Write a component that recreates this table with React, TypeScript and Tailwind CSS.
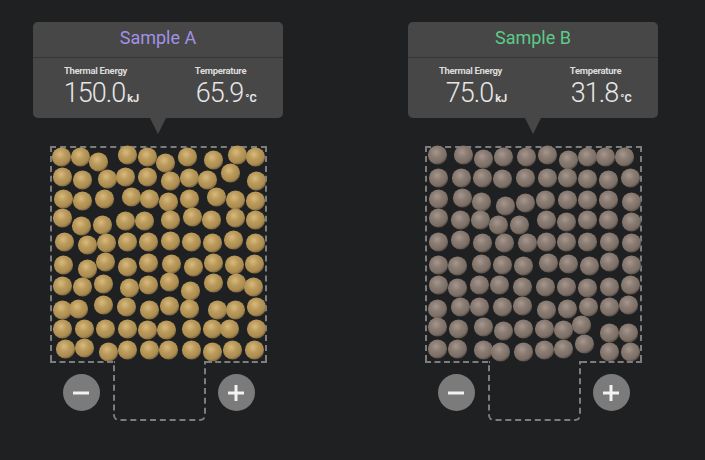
import React from 'react';

type Pt = [number, number];

const particlesA: Pt[] = [
  [61, 157], [80, 157], [98, 162], [127, 155], [147, 157], [165, 163], [187, 157], [213, 160], [237, 155], [255, 157],
  [62, 177], [82, 180], [107, 179], [125, 177], [147, 177], [170, 181], [189, 178], [207, 180], [230, 173], [256, 181],
  [63, 199], [82, 201], [104, 199], [131, 197], [149, 199], [168, 202], [189, 199], [216, 197], [235, 200], [255, 201],
  [62, 218], [81, 226], [102, 225], [125, 221], [144, 221], [170, 220], [192, 217], [211, 220], [235, 218], [255, 220],
  [64, 242], [87, 245], [106, 243], [127, 242], [148, 242], [170, 241], [191, 242], [212, 243], [233, 240], [255, 243],
  [63, 265], [87, 269], [105, 262], [127, 267], [148, 263], [171, 264], [193, 267], [213, 263], [234, 265], [254, 264],
  [62, 286], [82, 287], [103, 284], [129, 288], [148, 285], [169, 282], [190, 291], [213, 283], [236, 283], [253, 287],
  [62, 310], [78, 309], [103, 305], [126, 307], [149, 310], [169, 306], [189, 309], [217, 310], [235, 310], [256, 307],
  [62, 329], [84, 329], [105, 329], [127, 329], [147, 330], [166, 330], [191, 329], [212, 329], [229, 329], [256, 329],
  [65, 349], [84, 348], [108, 352], [127, 350], [149, 350], [168, 350], [191, 350], [212, 352], [232, 350], [254, 350],
];

const particlesB: Pt[] = [
  [437, 155], [463, 155], [483, 159], [503, 157], [526, 157], [547, 155], [568, 160], [587, 157], [605, 157], [624, 157],
  [438, 178], [461, 178], [482, 178], [502, 179], [525, 178], [547, 178], [567, 178], [587, 179], [608, 180], [630, 178],
  [438, 199], [462, 198], [481, 202], [505, 206], [525, 203], [545, 200], [567, 200], [587, 200], [608, 200], [631, 202],
  [438, 218], [460, 220], [480, 220], [498, 225], [519, 225], [546, 220], [566, 222], [587, 220], [608, 220], [631, 222],
  [438, 242], [460, 240], [482, 243], [504, 243], [527, 243], [546, 242], [566, 242], [587, 242], [609, 242], [631, 243],
  [438, 265], [457, 266], [481, 264], [502, 265], [523, 266], [548, 263], [568, 264], [589, 266], [609, 262], [631, 265],
  [438, 285], [457, 288], [479, 285], [499, 285], [522, 287], [545, 287], [566, 287], [587, 288], [609, 287], [630, 285],
  [437, 309], [460, 307], [479, 307], [502, 307], [522, 306], [546, 310], [567, 309], [588, 307], [609, 307], [628, 305],
  [437, 327], [458, 329], [483, 327], [503, 331], [523, 329], [544, 329], [563, 330], [581, 325], [609, 333], [628, 333],
  [437, 349], [457, 349], [483, 350], [500, 352], [523, 352], [544, 350], [563, 349], [584, 344], [609, 352], [630, 352],
];

type Sample = {
  name: string;
  titleClass: string;
  energy: string;
  temp: string;
  particles: Pt[];
  origin: number;
  colors: [string, string, string, string];
};

const samples: Sample[] = [
  {
    name: 'Sample A',
    titleClass: 'text-[#a391e6]',
    energy: '150.0',
    temp: '65.9',
    particles: particlesA,
    origin: 51.5,
    colors: ['#d8ba7e', '#bb9b5c', '#aa8b4f', '#836a41'],
  },
  {
    name: 'Sample B',
    titleClass: 'text-[#5ccb88]',
    energy: '75.0',
    temp: '31.8',
    particles: particlesB,
    origin: 426.5,
    colors: ['#a5978e', '#8a7c73', '#7b6e65', '#5d534d'],
  },
];

function Particles({ s, id }: { s: Sample; id: string }) {
  return (
    <svg width="213" height="213" viewBox={`${s.origin} 148 213 213`} className="block overflow-visible">
      <defs>
        <radialGradient id={`g-${id}`} cx="42%" cy="36%" r="62%">
          <stop offset="0%" stopColor={s.colors[0]} />
          <stop offset="45%" stopColor={s.colors[1]} />
          <stop offset="85%" stopColor={s.colors[2]} />
          <stop offset="100%" stopColor={s.colors[3]} />
        </radialGradient>
        <filter id={`f-${id}`} x="-20%" y="-20%" width="140%" height="140%">
          <feGaussianBlur stdDeviation="0.55" />
        </filter>
      </defs>
      <g filter={`url(#f-${id})`}>
        {s.particles.map(([x, y], i) => (
          <circle key={i} cx={x} cy={y} r="9.6" fill={`url(#g-${id})`} />
        ))}
      </g>
    </svg>
  );
}

function RoundButton({ plus }: { plus?: boolean }) {
  return (
    <div className="mt-[11px] w-[37px] h-[37px] rounded-full bg-[#7b7b7b] flex items-center justify-center">
      <svg width="18" height="18" viewBox="0 0 18 18">
        <rect x="1" y="7.5" width="16" height="3" fill="#f2f2f2" />
        {plus && <rect x="7.5" y="1" width="3" height="16" fill="#f2f2f2" />}
      </svg>
    </div>
  );
}

function Readout({ label, value, unit }: { label: string; value: string; unit: string }) {
  return (
    <div className="flex-1 flex flex-col items-center">
      <div className="text-[9.5px] leading-none font-bold tracking-[-0.3px] text-[#dcdcdc]">{label}</div>
      <div className="mt-[4px] flex items-baseline text-[#e6e6e6]">
        <span className="text-[27px] leading-none font-light tracking-[-1px]">{value}</span>
        {/* unit hangs off the right, the number alone is centred */}
        <span className="w-0 whitespace-nowrap pl-[2px] text-[11px] leading-none font-bold">{unit}</span>
      </div>
    </div>
  );
}

function SamplePanel({ s, id }: { s: Sample; id: string }) {
  return (
    <div className="w-[250px] flex flex-col items-center">
      <div className="w-[250px] h-[96px] rounded-[5px] bg-[#474747] flex flex-col">
        <div className={`h-[35px] pb-[5px] flex items-center justify-center text-[18px] ${s.titleClass}`}>{s.name}</div>
        <div className="h-px bg-[#363636]" />
        <div className="flex pt-[8px]">
          <Readout label="Thermal Energy" value={s.energy} unit="kJ" />
          <Readout label="Temperature" value={s.temp} unit="°C" />
        </div>
      </div>
      <div className="w-0 h-0 border-x-[8.5px] border-x-transparent border-t-[16px] border-t-[#474747]" />

      <div className="mt-[12px] w-[217px]">
        <div className="border-2 border-b-0 border-dashed border-[#7d7d7d]">
          <Particles s={s} id={id} />
        </div>
        <div className="flex">
          <div className="w-[63px] border-t-2 border-dashed border-[#7d7d7d] flex justify-center">
            <RoundButton />
          </div>
          <div className="w-[93px] h-[60px] border-2 border-t-0 border-dashed border-[#7d7d7d] rounded-b-[6px]" />
          <div className="w-[61px] border-t-2 border-dashed border-[#7d7d7d] flex justify-center">
            <RoundButton plus />
          </div>
        </div>
      </div>
    </div>
  );
}

export default function App() {
  return (
    <div className="w-[705px] h-[460px] bg-[#1f2022] pt-[22px] pl-[33px] flex gap-[125px] font-['Roboto',sans-serif] overflow-hidden">
      {samples.map((s, i) => (
        <SamplePanel key={s.name} s={s} id={`s${i}`} />
      ))}
    </div>
  );
}
